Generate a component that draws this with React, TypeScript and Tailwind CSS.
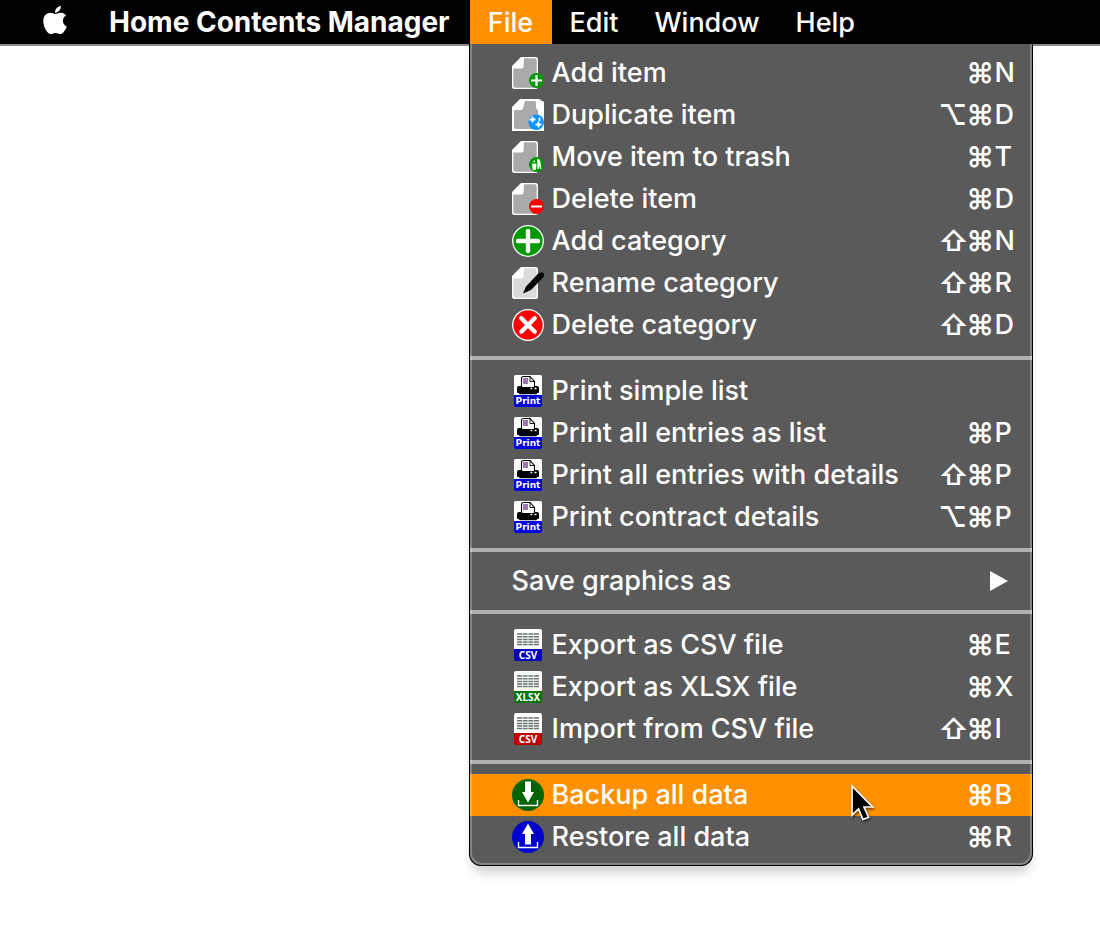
import type { ReactNode } from "react";
import { FaApple } from "react-icons/fa";

function PageShape({ fill = "#aaaaaa" }: { fill?: string }) {
  return (
    <>
      <path d="M9 0H23.500Q26 0 26 2.500V29.500Q26 32 23.500 32H2.500Q0 32 0 29.500V9Z" fill="#ffffff" />
      <path d="M12 1.200H22.500Q24.700 1.200 24.700 3.500V28.500Q24.700 30.700 22.500 30.700H3.500Q1.300 30.700 1.300 28.500V11.500H9.500Q11.500 11.500 11.500 9.500Z" fill={fill} />
    </>
  );
}

function Icon({ children }: { children: ReactNode }) {
  return (
    <svg viewBox="0 0 32 32" className="size-8 shrink-0" aria-hidden="true">
      {children}
    </svg>
  );
}

const addItemIcon = (
  <Icon>
    <PageShape />
    <circle cx="24.500" cy="23.500" r="7.500" fill="#009a00" />
    <path d="M24.500 18v11M19 23.500h11" stroke="#fff" strokeWidth="2.200" />
  </Icon>
);

const duplicateIcon = (
  <Icon>
    <path d="M8 0H27L32 3V32H0V8Z" fill="#fff" />
    <path d="M13 2H22.500Q24 2 24 4V8Q24 10 26 11V30H4Q2 30 2 28V11H9Q11 11 11 9Z" fill="#aaaaaa" />
    <circle cx="24.200" cy="23.200" r="7.800" fill="#0a94ff" />
    <path d="M20.500 17.500v6M17.500 20.500h6M26.500 22.500v6M23.500 25.500h6M27.500 18.500v3.500" stroke="#fff" strokeWidth="1.800" />
  </Icon>
);

const trashIcon = (
  <Icon>
    <PageShape />
    <circle cx="24.500" cy="23.500" r="7.500" fill="#009a00" />
    <path d="M20 22.500h4.500l-.5 6.500h-3.300ZM21 20.500l2-1.500v2.500ZM25 18.500l2-.500 1.500 3 .800 7h-1.300l-.700-3.500-.800 3.500H25.200l.300-5Z" fill="#fff" />
  </Icon>
);

const deleteItemIcon = (
  <Icon>
    <PageShape />
    <circle cx="24.500" cy="23.500" r="7.500" fill="#ff0000" />
    <path d="M19 23.500h11" stroke="#fff" strokeWidth="1.800" />
  </Icon>
);

const addCategoryIcon = (
  <Icon>
    <circle cx="16" cy="16" r="15.300" fill="#009a00" stroke="#fff" strokeWidth="1.300" />
    <path d="M16 6v20M6 16h20" stroke="#fff" strokeWidth="4.400" strokeLinecap="round" />
  </Icon>
);

const renameIcon = (
  <Icon>
    <PageShape fill="#dadada" />
    <path d="M11 26.500 14 19.500 26 6.800Q28.500 4.500 31 5.500Q32.500 6.500 32 9.500L19 23Z" fill="#000" />
    <path d="m21.500 13.500 4 4" stroke="#333" strokeWidth=".7" />
  </Icon>
);

const deleteCategoryIcon = (
  <Icon>
    <circle cx="16" cy="16" r="15.300" fill="#ff0000" stroke="#fff" strokeWidth="1.300" />
    <path d="m9.300 9.300 13.400 13.400M22.700 9.300 9.300 22.700" stroke="#fff" strokeWidth="4.400" strokeLinecap="round" />
  </Icon>
);

const printIcon = (
  <Icon>
    <rect x="2" width="28" height="32" rx="1.500" fill="#fff" />
    <path d="M2 20h28v10.500q0 1.500-1.500 1.500h-25Q2 32 2 30.500Z" fill="#0000dd" />
    <path d="M9.500 12V3.500Q9.500 1.500 11.500 1.500H18L22.500 6.500V12" fill="#fff" stroke="#000" strokeWidth="1.100" />
    <path d="M18 1.500V6.500h4.500" fill="none" stroke="#000" strokeWidth=".9" />
    <path d="M11 4h5M11 6h5M11 8h5" stroke="#7a4a9a" strokeWidth="1.400" />
    <path d="M5 13q0-2 2-2h2.500l1 1h11l1-1H25q2 0 2 2v4q0 1-1 1H6q-1 0-1-1ZM7 17h18v1.200q0 1-1 1H8q-1 0-1-1Z" fill="#000" />
    <path d="M18.500 13.500h1.800M22.500 13.500h2" stroke="#fff" strokeWidth="1.300" />
    <text x="16" y="29.300" textAnchor="middle" fill="#fff" className="font-['DejaVu_Sans',sans-serif] text-[9px] font-bold">
      Print
    </text>
  </Icon>
);

function SheetIcon({ label, color }: { label: string; color: string }) {
  return (
    <Icon>
      <path d="M2 21V2Q2 0 4 0H28Q30 0 30 2V21Z" fill="#fff" />
      <path d="M2 20h28v10q0 2-2 2H4q-2 0-2-2Z" fill={color} />
      <path d="M5 5h22M5 7.700h22M5 10.400h22M5 13.100h22M5 15.600h22" stroke="#6b746e" strokeWidth="1.500" />
      <path d="M10.500 4v12.500M16 4v12.500M21.500 4v12.500" stroke="#fff" strokeWidth=".7" />
      <text x="16" y="29.500" textAnchor="middle" fill="#fff" className="font-['Noto_Sans',sans-serif] text-[10px] font-bold">
        {label}
      </text>
    </Icon>
  );
}

const backupIcon = (
  <Icon>
    <circle cx="16" cy="16" r="16" fill="#006400" />
    <path d="M13 2.500h6V13h3L16 23.500 10 13h3Z" fill="#fff" />
    <path d="M6.500 21v5.500h19V21" fill="none" stroke="#fff" strokeWidth="1.400" />
  </Icon>
);

const restoreIcon = (
  <Icon>
    <circle cx="16" cy="16" r="16" fill="#0000cd" />
    <path d="M13 23.500h6V13h3L16 2.500 10 13h3Z" fill="#fff" />
    <path d="M6.500 21v5.500h19V21" fill="none" stroke="#fff" strokeWidth="1.400" />
  </Icon>
);

type Item = { label: string; icon?: ReactNode; mod?: string; letter?: string; active?: boolean };

const groups: Item[][] = [
  [
    { label: "Add item", icon: addItemIcon, letter: "N" },
    { label: "Duplicate item", icon: duplicateIcon, mod: "⌥", letter: "D" },
    { label: "Move item to trash", icon: trashIcon, letter: "T" },
    { label: "Delete item", icon: deleteItemIcon, letter: "D" },
    { label: "Add category", icon: addCategoryIcon, mod: "⇧", letter: "N" },
    { label: "Rename category", icon: renameIcon, mod: "⇧", letter: "R" },
    { label: "Delete category", icon: deleteCategoryIcon, mod: "⇧", letter: "D" },
  ],
  [
    { label: "Print simple list", icon: printIcon },
    { label: "Print all entries as list", icon: printIcon, letter: "P" },
    { label: "Print all entries with details", icon: printIcon, mod: "⇧", letter: "P" },
    { label: "Print contract details", icon: printIcon, mod: "⌥", letter: "P" },
  ],
  [{ label: "Save graphics as" }],
  [
    { label: "Export as CSV file", icon: <SheetIcon label="CSV" color="#0000bb" />, letter: "E" },
    { label: "Export as XLSX file", icon: <SheetIcon label="XLSX" color="#007500" />, letter: "X" },
    { label: "Import from CSV file", icon: <SheetIcon label="CSV" color="#bb0000" />, mod: "⇧", letter: "I" },
  ],
  [
    { label: "Backup all data", icon: backupIcon, letter: "B", active: true },
    { label: "Restore all data", icon: restoreIcon, letter: "R" },
  ],
];

function Pointer() {
  return (
    <svg viewBox="0 0 26 40" className="pointer-events-none absolute top-2.5 left-[380px] h-10 w-[26px] drop-shadow-[1px_2px_1px_rgba(0,0,0,0.5)]" aria-hidden="true">
      <path d="M2 2V31L8.500 25 13 35.500 18.500 33.200 14 23H22.500Z" fill="#000" stroke="#fff" strokeWidth="1.700" />
    </svg>
  );
}

function MenuRow({ item }: { item: Item }) {
  return (
    <li role="none" className="relative">
      <button
        type="button"
        role="menuitem"
        className={`flex h-[42px] w-full items-center pr-4 pl-[42px] text-left ${item.active ? "bg-[#ff9000]" : ""}`}
      >
        <span className="flex grow items-center gap-2">
          {item.icon}
          <span>{item.label}</span>
        </span>
        {item.letter && (
          <kbd className="grid grid-cols-[28px_28px_21px] font-['Inter',sans-serif]">
            <span className="text-[28px] font-semibold">{item.mod}</span>
            <span className="text-[28px] font-semibold">⌘</span>
            <span>{item.letter}</span>
          </kbd>
        )}
        {!item.icon && (
          <svg viewBox="0 0 18 20" className="mr-2 h-5 w-[18px]" aria-hidden="true">
            <path d="M0 0 18 10 0 20Z" fill="#fff" />
          </svg>
        )}
      </button>
      {item.active && <Pointer />}
    </li>
  );
}

export default function App() {
  return (
    <div className="min-h-screen bg-white font-['Inter',sans-serif] text-[27px] leading-[34px] font-medium text-white">
      <nav className="flex h-[46px] border-b-2 border-[#8a8a8a] bg-black" aria-label="Menu bar">
        <button type="button" aria-label="Apple menu" className="pr-[41px] pl-[42px]">
          <FaApple className="h-8 w-[26px] -translate-y-0.5" />
        </button>
        <button type="button" className="pr-5 text-[28px] font-bold">
          Home Contents Manager
        </button>
        <div className="relative">
          <button type="button" aria-expanded="true" className="h-11 w-[82px] bg-[#ff9000] pt-0.5">
            File
          </button>
          <div className="absolute top-11 -left-px z-10 w-[564px] overflow-hidden rounded-b-xl border border-t-0 border-black bg-[#5a5a5a] pt-2 pb-[7px] shadow-[0_10px_12px_-4px_rgba(0,0,0,0.2)]">
            {groups.map((group, i) => (
              <div key={i}>
                {i > 0 && <hr className={`h-1 border-0 bg-[#b0b0b0] ${i === 2 ? "mt-2.5 mb-2" : i === 3 ? "mt-2 mb-2.5" : "my-2.5"}`} />}
                <ul role="menu">
                  {group.map((item) => (
                    <MenuRow key={item.label} item={item} />
                  ))}
                </ul>
              </div>
            ))}
            <div className="pointer-events-none absolute inset-0 rounded-b-xl border-2 border-t-0 border-white/25" />
          </div>
        </div>
        <button type="button" className="px-[18px] pt-0.5">Edit</button>
        <button type="button" className="px-[18px] pt-0.5">Window</button>
        <button type="button" className="px-[18px] pt-0.5">Help</button>
      </nav>
    </div>
  );
}
